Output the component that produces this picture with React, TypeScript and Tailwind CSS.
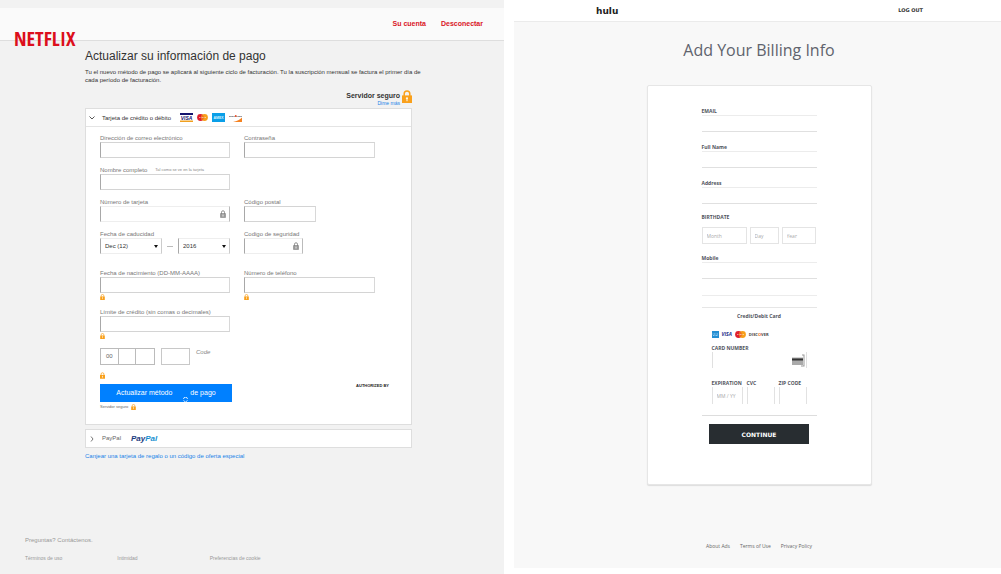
import { useId } from "react";
import type { ReactNode } from "react";

type LockProps = { className?: string };

function GoldLock({ className = "h-[6px] w-[5px]" }: LockProps) {
  return (
    <svg viewBox="0 0 10 13" className={className} aria-hidden="true">
      <path d="M2.2 6V3.8a2.8 2.8 0 0 1 5.6 0V6" fill="none" stroke="#f9a01b" strokeWidth="1.5" />
      <path d="M0 5.4h10V13H0z" fill="#f9a01b" />
      <path d="M5 7.2v4M3.9 8.3h2" stroke="#fff" strokeWidth="1" />
    </svg>
  );
}

function GreyLock() {
  return (
    <svg viewBox="0 0 12 16" className="h-2 w-[6px] shrink-0" aria-hidden="true">
      <path d="M3 8V4.5a3 3 0 0 1 6 0V8" fill="none" stroke="#777" strokeWidth="1.6" />
      <path d="M1 7h10v8H1z" fill="#999" stroke="#777" />
      <path d="M6 9v4" stroke="#fff" strokeWidth="1.6" />
    </svg>
  );
}

function VisaCard() {
  return (
    <svg viewBox="0 0 26 18" className="h-[9px] w-[13px]" role="img" aria-label="Visa">
      <path d="M0 0h26v18H0z" fill="#fff" />
      <path d="M0 0h26v4H0z" fill="#14146e" />
      <path d="M0 15h26v3H0z" fill="#f0a020" />
      <text x="13" y="13.6" textAnchor="middle" fontFamily="Liberation Sans" fontWeight="700" fontStyle="italic" fontSize="10" fill="#14146e">VISA</text>
    </svg>
  );
}

function Mastercard() {
  return (
    <svg viewBox="0 0 22 14" className="h-[7px] w-[11px]" role="img" aria-label="Mastercard">
      <circle cx="7" cy="7" r="6.8" fill="#e0202c" />
      <circle cx="15" cy="7" r="6.8" fill="#f79f1a" />
      <path d="M11 1.5a6.8 6.8 0 0 1 0 11a6.8 6.8 0 0 1 0-11" fill="#ef6a20" />
      <path d="M4 7h14" stroke="#fff" strokeWidth="1.5" strokeDasharray="2 1" opacity=".7" />
    </svg>
  );
}

function AmexCard() {
  return (
    <svg viewBox="0 0 26 18" className="h-[9px] w-[13px]" role="img" aria-label="American Express">
      <path d="M0 0h26v18H0z" fill="#0a9fe8" />
      <text x="13" y="12" textAnchor="middle" fontFamily="Liberation Sans" fontWeight="700" fontSize="7" fill="#d8f2ff">AMEX</text>
    </svg>
  );
}

function DiscoverCard() {
  return (
    <svg viewBox="0 0 26 18" className="h-[9px] w-[13px]" role="img" aria-label="Discover">
      <path d="M0 0h26v18H0z" fill="#fff" />
      <path d="M26 9v9H8c8-1.5 14-5 18-9z" fill="#f58220" />
      <text x="13" y="8" textAnchor="middle" fontFamily="Liberation Sans" fontWeight="700" fontSize="5" fill="#333">DISCOVER</text>
      <circle cx="13.5" cy="6" r="1.8" fill="#f04a20" />
    </svg>
  );
}

const boxInput = "block h-4 w-full border border-t-[#d4d4d4] border-r-[#d8d8d8] border-b-[#d4d4d4] border-l-[#a8a8a8] bg-white px-1 text-[6px] outline-none";
const leftLabel = "block h-2 whitespace-nowrap text-[6px] leading-[8px] text-[#777]";

type FieldProps = { label: string; hint?: string; width?: string; locked?: boolean; secure?: boolean };

function Field({ label, hint, width = "w-full", locked, secure }: FieldProps) {
  const id = useId();
  return (
    <div>
      <div className="flex h-2 gap-2">
        <label htmlFor={id} className={leftLabel}>{label}</label>
        {hint && <span className="whitespace-nowrap text-[4px] leading-[8px] text-[#888]">{hint}</span>}
      </div>
      {locked ? (
        <div className={`flex h-4 items-center border border-t-[#eee] border-r-[#bbb] border-b-[#eee] border-l-[#a8a8a8] bg-white pr-[3px] ${width}`}>
          <input id={id} className="h-full w-0 flex-1 px-1 text-[6px] outline-none" />
          <GreyLock />
        </div>
      ) : (
        <div className={width}><input id={id} className={boxInput} /></div>
      )}
      {secure && <GoldLock className="mt-px h-[6px] w-[5px]" />}
    </div>
  );
}

function Picker({ label, value, width }: { label: string; value: string; width: string }) {
  return (
    <div className={`grid h-4 items-center border border-t-[#eee] border-r-[#ccc] border-b-[#eee] border-l-[#a8a8a8] ${width}`}>
      <select aria-label={label} className="col-start-1 row-start-1 h-full w-full appearance-none bg-transparent pl-1 text-[6px] text-[#333] outline-none">
        <option>{value}</option>
      </select>
      <svg viewBox="0 0 8 6" className="pointer-events-none col-start-1 row-start-1 mr-[3px] h-[3px] w-1 justify-self-end" aria-hidden="true">
        <path d="M0 0h8L4 6z" fill="#111" />
      </svg>
    </div>
  );
}

function PairRow({ children, className = "" }: { children: ReactNode; className?: string }) {
  return <div className={`grid grid-cols-[130px_131px] gap-x-[14px] ${className}`}>{children}</div>;
}

function NetflixPanel() {
  return (
    <section className="flex flex-col bg-[#f2f2f2] pt-2 font-['Liberation_Sans',sans-serif] text-[#333]">
      <header className="flex h-[33px] items-start justify-between border-b border-[#dedede] bg-[#fafafa] pr-[21px] pl-[14px]">
        <a href="#netflix" className="pt-5 font-['Noto_Sans_ExtraCondensed','Open_Sans_Condensed','Roboto_Condensed','Liberation_Sans',sans-serif] text-[20px] leading-[22px] font-bold text-[#dc0f1c]">NETFLIX</a>
        <nav className="flex gap-[15px] pt-[11px] text-[7px] leading-[9px] font-bold text-[#d9141f]">
          <a href="#cuenta">Su cuenta</a>
          <a href="#salir">Desconectar</a>
        </nav>
      </header>

      <main className="ml-[85px] w-[327px] pt-[7px]">
        <h1 className="text-[12px] leading-[16px] whitespace-nowrap">Actualizar su información de pago</h1>
        <p className="w-[340px] pt-1 text-[6px] leading-[8px]">
          Tu el nuevo método de pago se aplicará al siguiente ciclo de facturación. Tu la suscripción mensual se factura el primer día de cada período de facturación.
        </p>
        <div className="mt-[6px] flex h-[18px] items-start justify-end gap-[2px]">
          <div className="flex flex-col items-end pt-[2px]">
            <span className="text-[7px] leading-[8px] font-bold">Servidor seguro</span>
            <a href="#seguro" className="text-[5px] leading-[7px] text-[#1a84e8]">Dime más</a>
          </div>
          <GoldLock className="h-[13px] w-[10px]" />
        </div>

        <div className="border border-[#dedede] bg-white">
          <div className="flex h-[18px] items-center border-b border-[#e4e4e4] pl-[3px]">
            <svg viewBox="0 0 12 8" className="h-1 w-[6px]" aria-hidden="true">
              <path d="M1 1l5 5 5-5" fill="none" stroke="#444" strokeWidth="1.8" />
            </svg>
            <h2 className="pl-[7px] text-[6px] leading-[8px]">Tarjeta de crédito o débito</h2>
            <div className="ml-[9px] flex items-center gap-1">
              <VisaCard />
              <Mastercard />
              <AmexCard />
              <DiscoverCard />
            </div>
          </div>
          <form className="flex flex-col px-[14px] pt-[7px] pb-3" onSubmit={(e) => e.preventDefault()}>
            <div className="flex flex-col gap-2">
              <PairRow>
                <Field label="Dirección de correo electrónico" />
                <Field label="Contraseña" />
              </PairRow>
              <PairRow>
                <Field label="Nombre completo" hint="Tal como se ve en la tarjeta" />
              </PairRow>
              <PairRow>
                <Field label="Número de tarjeta" locked />
                <Field label="Código postal" width="w-[72px]" />
              </PairRow>
              <PairRow>
                <fieldset>
                  <legend className={leftLabel}>Fecha de caducidad</legend>
                  <div className="flex items-center justify-between">
                    <Picker label="Mes" value="Dec (12)" width="w-[62px]" />
                    <span className="h-px w-[6px] bg-[#bbb]" />
                    <Picker label="Año" value="2016" width="w-[52px]" />
                  </div>
                </fieldset>
                <Field label="Codigo de seguridad" width="w-[59px]" locked />
              </PairRow>
            </div>
            <PairRow className="mt-[15px]">
              <Field label="Fecha de nacimiento (DD-MM-AAAA)" secure />
              <Field label="Número de teléfono" secure />
            </PairRow>
            <PairRow className="mt-2">
              <Field label="Límite de crédito (sin comas o decimales)" secure />
            </PairRow>
            <div className="mt-[9px] flex items-start">
              <div className="flex h-[17px] w-[55px] border border-[#bbb]">
                <input aria-label="Código, parte 1" placeholder="00" className="w-1/3 border-r border-[#bbb] text-center text-[6px] outline-none placeholder:text-[#666]" />
                <input aria-label="Código, parte 2" className="w-1/3 border-r border-[#bbb] text-[6px] outline-none" />
                <input aria-label="Código, parte 3" className="w-1/3 text-[6px] outline-none" />
              </div>
              <input id="code" className="ml-[6px] h-[17px] w-[29px] border border-[#c8c8c8] text-[6px] outline-none" />
              <label htmlFor="code" className="pl-[6px] text-[6px] leading-[8px] text-[#888] italic">Code</label>
            </div>
            <GoldLock className="mt-[7px] h-[7px] w-[5px]" />
            <div className="mt-[5px] flex items-start justify-between pr-2">
              <button type="submit" className="relative flex h-[18px] w-[132px] items-center justify-center gap-[18px] bg-[#0080ff] text-[7px] text-white">
                <span>Actualizar método</span>
                <span>de pago</span>
                <svg viewBox="0 0 10 10" className="absolute bottom-0 left-[83px] h-[5px] w-[5px]" aria-hidden="true">
                  <path d="M1 4a4 3.5 0 0 1 8 0M1 7l4 3 4-3" fill="none" stroke="#cfe7ff" strokeWidth="2" />
                </svg>
              </button>
              <span className="text-[4px] leading-[4px] font-bold text-[#222]">AUTHORIZED BY</span>
            </div>
            <div className="flex h-[10px] items-center gap-[3px] text-[4px] text-[#666]">
              <span>Servidor seguro</span>
              <GoldLock />
            </div>
          </form>
        </div>

        <div className="mt-1 flex h-[19px] items-center border border-[#dedede] bg-white pl-1">
          <svg viewBox="0 0 8 12" className="h-[6px] w-1" aria-hidden="true">
            <path d="M2 1l4 5-4 5" fill="none" stroke="#555" strokeWidth="1.6" />
          </svg>
          <span className="pl-2 text-[6px] text-[#666]">PayPal</span>
          <span className="pl-[10px] text-[8px] font-bold text-[#1b3d80] italic">Pay<span className="text-[#1790d0]">Pal</span></span>
        </div>
        <a href="#canje" className="mt-1 block text-[6px] leading-[8px] whitespace-nowrap text-[#1a84e8]">Canjear una tarjeta de regalo o un código de oferta especial</a>
      </main>

      <footer className="mt-auto pb-[12px] pl-[25px] text-[#999]">
        <a href="#contacto" className="block text-[6px] leading-[8px]">Preguntas? Contáctenos.</a>
        <nav className="mt-[10px] grid w-[277px] grid-cols-3 text-[5px] leading-[8px]">
          <a href="#terminos">Términos de uso</a>
          <a href="#intimidad">Intimidad</a>
          <a href="#cookies" className="whitespace-nowrap">Preferencias de cookie</a>
        </nav>
      </footer>
    </section>
  );
}

const rightLabel = "block h-2 whitespace-nowrap text-[5px] leading-[8px] font-bold text-[#50535c]";

function LineField({ label }: { label: string }) {
  const id = useId();
  return (
    <div>
      <label htmlFor={id} className={rightLabel}>{label}</label>
      <input id={id} className="block h-[17px] w-full border-y border-t-[#ececec] border-b-[#e0e0e0] px-1 text-[5px] outline-none" />
    </div>
  );
}

function CardField({ label, placeholder, width }: { label: string; placeholder?: string; width: string }) {
  const id = useId();
  return (
    <div className={width}>
      <label htmlFor={id} className={rightLabel}>{label}</label>
      <input id={id} placeholder={placeholder} className="block h-[17px] w-full border-x border-[#e2e2e2] px-1 text-[5px] outline-none placeholder:text-[#aaa]" />
    </div>
  );
}

const dateBox = "h-[17px] border border-[#e4e4e4] px-1 text-[5px] outline-none placeholder:text-[#aaa]";

function HuluPanel() {
  return (
    <section className="flex flex-col bg-white pb-[6px] font-['Open_Sans',sans-serif] text-[#50535c]">
      <header className="ml-[10px] flex h-[22px] items-center justify-between border-b border-[#ebebeb] pr-[78px] pl-[82px]">
        <a href="#hulu" className="font-['DejaVu_Sans',sans-serif] text-[9px] leading-[12px] font-bold text-[#222]">hulu</a>
        <a href="#logout" className="pb-[2px] font-['DejaVu_Sans',sans-serif] text-[5px] leading-[8px] font-bold text-[#333]">LOG OUT</a>
      </header>
      <div className="ml-[10px] flex flex-1 flex-col items-center bg-[#f8f8f8] pl-[3px]">
        <h1 className="pt-4 text-[16px] leading-[24px] text-[#60636d]">Add Your Billing Info</h1>
        <form className="mt-[23px] w-[225px] rounded-[2px] border border-[#e6e6e6] bg-white px-[54px] pt-[21px] pb-[40px] shadow-[0_1px_1px_#ddd]" onSubmit={(e) => e.preventDefault()}>
          <div className="flex flex-col gap-[11px]">
            <LineField label="EMAIL" />
            <LineField label="Full Name" />
            <LineField label="Address" />
          </div>
          <fieldset className="mt-[9px]">
            <legend className={rightLabel}>BIRTHDATE</legend>
            <div className="mt-[6px] grid grid-cols-[45px_29px_34px] gap-[3px]">
              <input aria-label="Month" placeholder="Month" className={dateBox} />
              <input aria-label="Day" placeholder="Day" className={dateBox} />
              <input aria-label="Year" placeholder="Year" className={dateBox} />
            </div>
          </fieldset>
          <div className="mt-[10px]">
            <LineField label="Mobile" />
          </div>
          <hr className="mt-4 border-[#ececec]" />
          <hr className="mt-[11px] border-[#e6e6e6]" />
          <h2 className="mt-1 text-center text-[5px] leading-[8px] font-bold">Credit/Debit Card</h2>
          <div className="pr-[10px] pl-[10px]">
            <div className="mt-[10px] flex h-2 items-center gap-[3px]">
              <svg viewBox="0 0 14 14" className="h-[7px] w-[7px]" role="img" aria-label="American Express">
                <path d="M0 0h14v14H0z" fill="#258fd2" />
                <path d="M1 6h12M2 9h10" stroke="#b6e2ff" strokeWidth="1.5" strokeDasharray="2 1" />
              </svg>
              <span className="text-[5px] leading-[7px] font-bold text-[#1c2f8a] italic">VISA</span>
              <Mastercard />
              <span className="text-[4px] leading-[7px] font-bold text-[#444]">DISC<span className="text-[#f06a20]">O</span>VER</span>
            </div>
            <div className="mt-[6px]">
              <label htmlFor="card-number" className={rightLabel}>CARD NUMBER</label>
              <div className="flex h-4 items-center border-x border-[#e0e0e0] pr-px">
                <input id="card-number" className="h-full w-0 flex-1 px-1 text-[5px] outline-none" />
                <svg viewBox="0 0 26 26" className="h-[13px] w-[13px]" aria-hidden="true">
                  <path d="M0 7h22v15H0z" fill="#aaa" />
                  <path d="M0 9h22v4H0z" fill="#333" />
                  <path d="M20 1h5v24h-7v-2h5V3h-3z" fill="#999" />
                </svg>
              </div>
            </div>
            <div className="mt-[11px] flex justify-between">
              <CardField label="EXPIRATION" placeholder="MM / YY" width="w-[31px]" />
              <CardField label="CVC" width="w-[28px]" />
              <CardField label="ZIP CODE" width="w-[28px]" />
            </div>
          </div>
          <hr className="mt-[11px] border-[#ddd]" />
          <div className="mt-2 flex justify-center">
            <button type="submit" className="h-5 w-[100px] bg-[#282d31] font-['DejaVu_Sans',sans-serif] text-[6px] font-bold text-white">CONTINUE</button>
          </div>
        </form>
        <footer className="mt-auto flex gap-[10px] pb-[18px] text-[5px] leading-[8px] text-[#666]">
          <a href="#ads">About Ads</a>
          <a href="#terms">Terms of Use</a>
          <a href="#privacy">Privacy Policy</a>
        </footer>
      </div>
    </section>
  );
}

export default function App() {
  return (
    <div className="grid min-h-screen grid-cols-[504fr_497fr] bg-white">
      <NetflixPanel />
      <HuluPanel />
    </div>
  );
}
